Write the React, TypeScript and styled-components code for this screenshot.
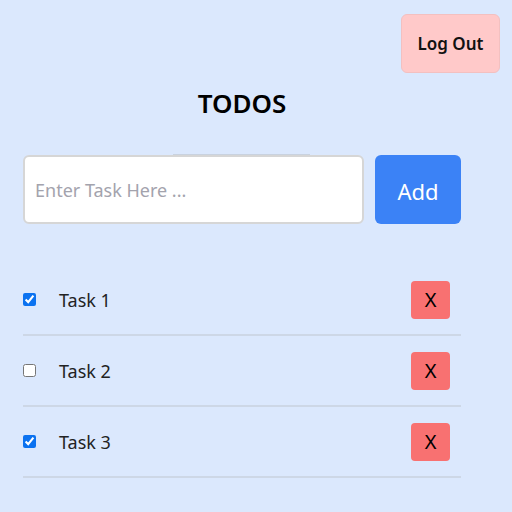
import React, { useState } from "react";
import styled, { createGlobalStyle } from "styled-components";

const GlobalStyle = createGlobalStyle`
  html, body { margin: 0; padding: 0; background: #dbe8fd; }
  body { font-family: "Noto Sans", "Open Sans", sans-serif; color: #111; }
  * { box-sizing: border-box; }
`;

const Page = styled.div`
  width: 512px;
  min-height: 512px;
  background: #dbe8fd;
  padding: 14px 12px 0 23px;
`;

const TopBar = styled.div`
  display: flex;
  justify-content: flex-end;
`;

const LogOutButton = styled.button`
  width: 99px;
  height: 59px;
  border: 1px solid #f3c0c0;
  border-radius: 6px;
  background: #ffc9c9;
  font-family: inherit;
  font-weight: 600;
  font-size: 17px;
  color: #111;
  cursor: pointer;
`;

const Main = styled.div`
  width: 438px;
  display: flex;
  flex-direction: column;
`;

const Title = styled.h1`
  margin: 12px 0 0;
  text-align: center;
  font-size: 26px;
  font-weight: 600;
  line-height: 36px;
  color: #000;
`;

const Form = styled.form`
  position: relative;
  margin-top: 34px;
  display: flex;
  gap: 11px;
`;

const Shadow = styled.div`
  position: absolute;
  left: 150px;
  top: -1px;
  width: 137px;
  height: 2px;
  background: #c9d2df;
`;

const TaskInput = styled.input`
  position: relative;
  width: 341px;
  height: 69px;
  border: 2px solid #d6d6d6;
  border-radius: 6px;
  background: #fff;
  padding: 0 10px;
  font-family: inherit;
  font-size: 18px;
  color: #222;
  outline: none;
  &::placeholder { color: #a3a3ad; }
`;

const AddButton = styled.button`
  width: 86px;
  height: 69px;
  border: none;
  border-radius: 6px;
  background: #3b82f6;
  color: #fff;
  font-family: inherit;
  font-size: 22px;
  padding-top: 4px;
  cursor: pointer;
`;

const List = styled.ul`
  list-style: none;
  margin: 41px 0 0;
  padding: 0;
`;

const Row = styled.li`
  display: flex;
  align-items: center;
  height: 71px;
  border-bottom: 2px solid #cdd7e6;
  padding: 0 11px 0 0;
`;

const Check = styled.input`
  width: 13px;
  height: 13px;
  margin: 0 23px 0 0;
  accent-color: #0b72f0;
`;

const TaskText = styled.span`
  flex: 1;
  font-size: 18px;
  color: #222;
`;

const DeleteButton = styled.button`
  width: 39px;
  height: 38px;
  border: none;
  border-radius: 4px;
  background: #f87171;
  color: #000;
  font-family: inherit;
  font-size: 20px;
  padding: 0;
  cursor: pointer;
`;

const initial = [
  { id: 1, text: "Task 1", done: true },
  { id: 2, text: "Task 2", done: false },
  { id: 3, text: "Task 3", done: true },
];

export default function App() {
  const [tasks, setTasks] = useState(initial);
  return (
    <Page>
      <GlobalStyle />
      <TopBar>
        <LogOutButton>Log Out</LogOutButton>
      </TopBar>
      <Main>
        <Title>TODOS</Title>
        <Form onSubmit={(e) => e.preventDefault()}>
          <Shadow />
          <TaskInput placeholder="Enter Task Here ..." />
          <AddButton type="submit">Add</AddButton>
        </Form>
        <List>
          {tasks.map((t) => (
            <Row key={t.id}>
              <Check
                type="checkbox"
                checked={t.done}
                onChange={() =>
                  setTasks((ts) => ts.map((x) => (x.id === t.id ? { ...x, done: !x.done } : x)))
                }
              />
              <TaskText>{t.text}</TaskText>
              <DeleteButton>X</DeleteButton>
            </Row>
          ))}
        </List>
      </Main>
    </Page>
  );
}
